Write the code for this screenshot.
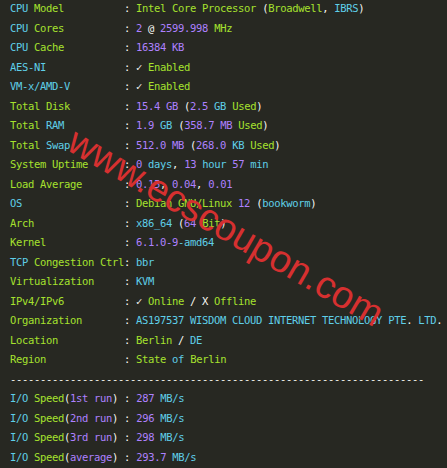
type Seg = [string, string?];

const colors: Record<string, string> = {
  c: "text-[#5fcfe8]",
  g: "text-[#a6e22e]",
  p: "text-[#ae81ff]",
  w: "text-[#f8f8f2]",
};

const rows: { label: Seg[]; value: Seg[] }[] = [
  {
    label: [["CPU", "c"], [" "], ["Model", "g"]],
    value: [["Intel Core Processor", "g"], [" "], ["(", "w"], ["Broadwell", "g"], [",", "w"], [" "], ["IBRS", "c"], [")", "w"]],
  },
  {
    label: [["CPU", "c"], [" "], ["Cores", "g"]],
    value: [["2", "p"], [" @ ", "w"], ["2599.998", "p"], [" "], ["MHz", "g"]],
  },
  { label: [["CPU", "c"], [" "], ["Cache", "g"]], value: [["16384 KB", "p"]] },
  { label: [["AES-NI", "c"]], value: [["✓", "w"], [" "], ["Enabled", "g"]] },
  { label: [["VM-x/AMD-V", "c"]], value: [["✓", "w"], [" "], ["Enabled", "g"]] },
  {
    label: [["Total Disk", "g"]],
    value: [["15.4 GB", "p"], [" (", "w"], ["2.5", "p"], [" "], ["GB", "c"], [" "], ["Used", "g"], [")", "w"]],
  },
  {
    label: [["Total", "g"], [" "], ["RAM", "c"]],
    value: [["1.9", "p"], [" "], ["GB", "c"], [" (", "w"], ["358.7 MB", "p"], [" "], ["Used", "g"], [")", "w"]],
  },
  {
    label: [["Total", "g"], [" "], ["Swap", "c"]],
    value: [["512.0 MB", "p"], [" (", "w"], ["268.0", "p"], [" "], ["KB", "c"], [" "], ["Used", "g"], [")", "w"]],
  },
  {
    label: [["System Uptime", "g"]],
    value: [["0", "p"], [" "], ["days", "c"], [",", "w"], [" "], ["13", "p"], [" "], ["hour", "c"], [" "], ["57", "p"], [" "], ["min", "c"]],
  },
  {
    label: [["Load Average", "g"]],
    value: [["0.15", "p"], [", ", "w"], ["0.04", "p"], [", ", "w"], ["0.01", "p"]],
  },
  {
    label: [["OS", "c"]],
    value: [["Debian GNU/Linux", "g"], [" "], ["12", "p"], [" (", "w"], ["bookworm", "c"], [")", "w"]],
  },
  {
    label: [["Arch", "g"]],
    value: [["x86_64", "c"], [" (", "w"], ["64", "p"], [" "], ["Bit", "g"], [")", "w"]],
  },
  { label: [["Kernel", "g"]], value: [["6.1.0-9", "p"], ["-amd64", "c"]] },
  { label: [["TCP", "c"], [" "], ["Congestion Ctrl", "g"]], value: [["bbr", "c"]] },
  { label: [["Virtualization", "g"]], value: [["KVM", "c"]] },
  {
    label: [["IPv4/IPv6", "g"]],
    value: [["✓", "w"], [" "], ["Online", "g"], [" / X ", "w"], ["Offline", "g"]],
  },
  {
    label: [["Organization", "g"]],
    value: [["AS197537 WISDOM CLOUD INTERNET TECHNOLOGY PTE", "c"], [". ", "w"], ["LTD", "c"], [".", "w"]],
  },
  { label: [["Location", "g"]], value: [["Berlin", "g"], [" / ", "w"], ["DE", "c"]] },
  { label: [["Region", "g"]], value: [["State", "g"], [" "], ["of", "c"], [" "], ["Berlin", "g"]] },
];

const io = [
  ["1st run", "287"],
  ["2nd run", "296"],
  ["3rd run", "298"],
  ["average", "293.7"],
];

function Segs({ segs }: { segs: Seg[] }) {
  return (
    <>
      {segs.map(([t, c], i) => (
        <span key={i} className={c ? colors[c] : ""}>
          {t}
        </span>
      ))}
    </>
  );
}

function Row({ label, value }: { label: Seg[]; value: Seg[] }) {
  const len = label.reduce((n, [t]) => n + t.length, 0);
  return (
    <div className="h-[19.5px]">
      <Segs segs={label} />
      <span>{" ".repeat(Math.max(0, 19 - len))}</span>
      <span className="text-[#f8f8f2]">: </span>
      <Segs segs={value} />
    </div>
  );
}

export default function App() {
  return (
    <div className="relative h-[468px] w-full overflow-hidden bg-[#272822]">
      <div
        className="whitespace-pre pl-[10px] -mt-px text-[10.5px] tracking-[-0.32px] leading-[19.5px]"
        style={{ fontFamily: '"DejaVu Sans Mono", "Liberation Mono", monospace' }}
      >
        {rows.map((r, i) => (
          <Row key={i} label={r.label} value={r.value} />
        ))}
        <div className="h-[19.5px] text-[#f8f8f2]">{"-".repeat(69)}</div>
        {io.map(([run, speed]) => (
          <Row
            key={run}
            label={[["I/O", "c"], [" "], ["Speed", "g"], ["(", "w"], [run, "p"], [")", "w"]]}
            value={[[speed, "p"], [" "], ["MB/s", "c"]]}
          />
        ))}
      </div>

      {/* watermark */}
      <div
        className="pointer-events-none absolute left-[226px] top-[227px] -translate-x-1/2 -translate-y-1/2 rotate-[30deg] whitespace-nowrap text-[38px] leading-none text-[#d63030]"
        style={{ fontFamily: '"Liberation Sans", Arial, sans-serif' }}
      >
        www.ecscoupon.com
      </div>
    </div>
  );
}
